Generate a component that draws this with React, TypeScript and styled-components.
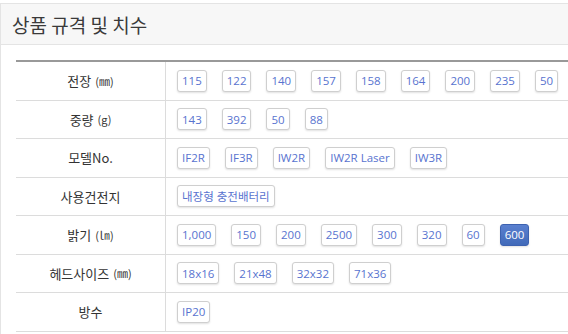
import styled, { createGlobalStyle } from "styled-components";

const GlobalStyle = createGlobalStyle`
  html, body {
    margin: 0;
    padding: 0;
    background: #fff;
  }
  body {
    font-family: "Open Sans", "Noto Sans CJK KR", sans-serif;
  }
`;

type SpecRow = {
  label: string;
  unit?: string;
  options: string[];
  selected?: string;
};

const specs: SpecRow[] = [
  {
    label: "전장",
    unit: "(㎜)",
    options: ["115", "122", "140", "157", "158", "164", "200", "235", "50"],
  },
  { label: "중량", unit: "(g)", options: ["143", "392", "50", "88"] },
  {
    label: "모델No.",
    options: ["IF2R", "IF3R", "IW2R", "IW2R Laser", "IW3R"],
  },
  { label: "사용건전지", options: ["내장형 충전배터리"] },
  {
    label: "밝기",
    unit: "(㏐)",
    options: ["1,000", "150", "200", "2500", "300", "320", "60", "600"],
    selected: "600",
  },
  {
    label: "헤드사이즈",
    unit: "(㎜)",
    options: ["18x16", "21x48", "32x32", "71x36"],
  },
  { label: "방수", options: ["IP20"] },
];

export default function App() {
  return (
    <>
      <GlobalStyle />
      <Panel>
        <PanelHeader>상품 규격 및 치수</PanelHeader>
        <PanelBody>
          <SpecTable>
            {specs.map((row) => (
              <Row key={row.label}>
                <Label>
                  {row.label}
                  {row.unit && <Unit>{row.unit}</Unit>}
                </Label>
                <Options>
                  {row.options.map((opt) => (
                    <Chip key={opt} $active={opt === row.selected}>
                      {opt}
                    </Chip>
                  ))}
                </Options>
              </Row>
            ))}
          </SpecTable>
        </PanelBody>
      </Panel>
    </>
  );
}

const Panel = styled.section`
  margin-top: 3px;
  border-top: 1px solid #e4e4e4;
  border-left: 1px solid #e4e4e4;
  min-height: 340px;
  overflow: hidden;
`;

const PanelHeader = styled.h2`
  margin: 0;
  height: 40px;
  padding-left: 11px;
  background: #f7f7f7;
  border-bottom: 1px solid #e4e4e4;
  display: flex;
  align-items: center;
  font-family: "Noto Sans CJK KR", sans-serif;
  font-size: 19px;
  font-weight: 400;
  color: #3a3a3a;
`;

const PanelBody = styled.div`
  padding: 15px 0 0 15px;
`;

const SpecTable = styled.div`
  border-top: 2px solid #999;
`;

const Row = styled.div`
  display: grid;
  grid-template-columns: 150px 1fr;
  height: 37.5px;
  border-bottom: 1px solid #dcdcdc;
`;

const Label = styled.div`
  display: flex;
  align-items: center;
  justify-content: center;
  gap: 4px;
  border-right: 1px solid #dcdcdc;
  font-family: "Noto Sans CJK KR", sans-serif;
  font-size: 13px;
  color: #333;
`;

const Unit = styled.span`
  font-size: 11px;
`;

const Options = styled.div`
  display: flex;
  align-items: center;
  gap: 15px;
  padding-left: 11px;
  white-space: nowrap;
  overflow: hidden;
`;

const Chip = styled.span<{ $active?: boolean }>`
  display: inline-flex;
  align-items: center;
  flex-shrink: 0;
  height: 20px;
  padding: 0 4px;
  border: 1px solid ${(p) => (p.$active ? "#3d62b0" : "#cfcfcf")};
  border-radius: 3px;
  background: ${(p) =>
    p.$active ? "linear-gradient(#5a80cf, #416ab9)" : "#fff"};
  box-shadow: 0 1px 2px rgba(0, 0, 0, 0.12);
  font-family: "Open Sans", "Noto Sans CJK KR", sans-serif;
  font-size: 11.5px;
  color: ${(p) => (p.$active ? "#fff" : "#5873cf")};
`;
